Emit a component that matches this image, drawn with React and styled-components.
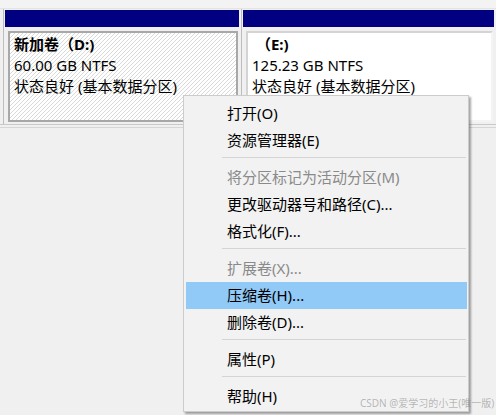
import styled, { createGlobalStyle } from 'styled-components'

const GlobalStyle = createGlobalStyle`
  html, body {
    margin: 0;
    padding: 0;
  }
  body {
    background: #f0f0f0;
    font-family: "Noto Sans", "Noto Sans CJK SC", sans-serif;
  }
`

const menuItems = [
  { label: '打开(O)' },
  { label: '资源管理器(E)' },
  { sep: true },
  { label: '将分区标记为活动分区(M)', disabled: true },
  { label: '更改驱动器号和路径(C)...' },
  { label: '格式化(F)...' },
  { sep: true },
  { label: '扩展卷(X)...', disabled: true },
  { label: '压缩卷(H)...', active: true },
  { label: '删除卷(D)...' },
  { sep: true },
  { label: '属性(P)' },
  { sep: true },
  { label: '帮助(H)' },
]

function App() {
  return (
    <Page>
      <GlobalStyle />
      <TopStrip />
      <DiskRow>
        <Partition $width={238}>
          <Header />
          <PartBody>
            <Volume $selected>
              <Label $bold>新加卷（D:)</Label>
              <Label>60.00 GB NTFS</Label>
              <Label>状态良好 (基本数据分区)</Label>
            </Volume>
          </PartBody>
        </Partition>
        <Partition $width={255}>
          <Header />
          <PartBody>
            <Volume>
              <Label $bold>&nbsp;（E:)</Label>
              <Label>125.23 GB NTFS</Label>
              <Label>状态良好 (基本数据分区)</Label>
            </Volume>
          </PartBody>
        </Partition>
      </DiskRow>
      <BottomLine />

      <Menu>
        {menuItems.map((item, i) =>
          item.sep ? (
            <Separator key={i} />
          ) : (
            <MenuItem key={i} $disabled={item.disabled} $active={item.active}>
              {item.label}
            </MenuItem>
          )
        )}
      </Menu>

      <Watermark>CSDN @爱学习的小王(唯一版)</Watermark>
    </Page>
  )
}

const Page = styled.div`
  position: relative;
  width: 496px;
  height: 415px;
  overflow: hidden;
  background: #f0f0f0;
`

const TopStrip = styled.div`
  height: 8px;
  background: #f3f3f3;
  border-bottom: 1px solid #e4e4e4;
`

const DiskRow = styled.div`
  display: flex;
  height: 115px;
  padding-left: 3px;
  background: #f0f0f0;
  border-bottom: 1px solid #c9c9c9;
`

const Partition = styled.div`
  width: ${p => p.$width}px;
  flex-shrink: 0;
  box-sizing: border-box;
  display: flex;
  flex-direction: column;
  padding: 1px 2px 0 1px;
  border-left: 1px solid #bdbdbd;
`

const Header = styled.div`
  height: 17px;
  background: #000080;
`

const PartBody = styled.div`
  flex: 1;
  display: flex;
  padding: 4px 1px 2px 3px;
`

const Volume = styled.div`
  flex: 1;
  box-sizing: border-box;
  padding: 1px 4px;
  border: 2px solid ${p => (p.$selected ? '#a8a8a8' : '#d4d4d4')};
  border-right-color: ${p => (p.$selected ? '#a8a8a8' : '#f4f4f4')};
  border-bottom-color: ${p => (p.$selected ? '#a8a8a8' : '#f4f4f4')};
  background: ${p =>
    p.$selected
      ? 'repeating-linear-gradient(135deg, #d9d9d9 0 1px, #ffffff 1px 2.83px)'
      : '#ffffff'};
`

const Label = styled.div`
  font-size: 15px;
  line-height: 21px;
  color: #000;
  font-weight: ${p => (p.$bold ? 700 : 400)};
  white-space: nowrap;
`

const BottomLine = styled.div`
  height: 2px;
  border-bottom: 1px solid #d6d6d6;
`

const Menu = styled.div`
  position: absolute;
  left: 183px;
  top: 95px;
  width: 286px;
  box-sizing: border-box;
  padding: 4px 1px 1px 2px;
  background: #f2f2f2;
  border: 1px solid #cccccc;
  box-shadow: 2px 2px 2px rgba(0, 0, 0, 0.35);
`

const MenuItem = styled.div`
  height: 27px;
  line-height: 27px;
  padding-left: 41px;
  font-size: 15px;
  white-space: nowrap;
  color: ${p => (p.$disabled ? '#8a8a8a' : '#000')};
  background: ${p => (p.$active ? '#91c9f7' : 'transparent')};
`

const Separator = styled.div`
  height: 10px;
  box-sizing: border-box;
  padding-top: 3px;
  &::after {
    content: '';
    display: block;
    height: 1px;
    margin-left: 36px;
    margin-right: 1px;
    background: #d4d4d4;
  }
`

const Watermark = styled.div`
  position: absolute;
  left: 360px;
  top: 396px;
  font-size: 10px;
  line-height: 14px;
  white-space: nowrap;
  color: rgba(130, 130, 130, 0.55);
`

export default App
